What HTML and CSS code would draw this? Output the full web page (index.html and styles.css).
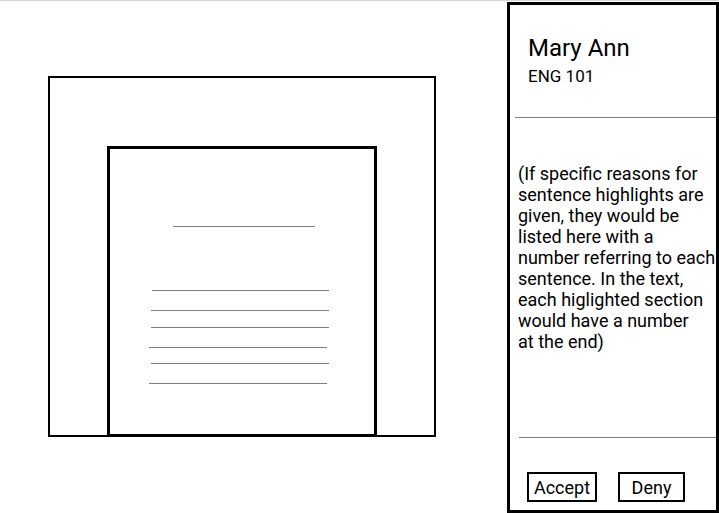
FILE: index.html
```html
<!DOCTYPE html>
<html>
<head>
<meta charset="utf-8">
<link rel="stylesheet" href="styles.css">
</head>
<body>
<div class="page">
  <main class="canvas">
    <div class="outer">
      <div class="doc">
        <div class="rule title"></div>
        <div class="rule r1"></div>
        <div class="rule r2"></div>
        <div class="rule r3"></div>
        <div class="rule r4"></div>
        <div class="rule r5"></div>
        <div class="rule r6"></div>
      </div>
    </div>
  </main>
  <aside class="panel">
    <div class="head">
      <div class="name">Mary Ann</div>
      <div class="course">ENG 101</div>
    </div>
    <div class="divider d1"></div>
    <p class="notes">(If specific reasons for<br>sentence highlights are<br>given, they would be<br>listed here with a<br>number referring to each<br>sentence. In the text,<br>each higlighted section<br>would have a number<br>at the end)</p>
    <div class="divider d2"></div>
    <div class="actions">
      <button class="btn accept">Accept</button>
      <button class="btn deny">Deny</button>
    </div>
  </aside>
</div>
</body>
</html>
```
FILE: styles.css
```css
html, body {
  margin: 0;
  padding: 0;
  background: #fff;
}
body {
  font-family: Roboto, "Liberation Sans", sans-serif;
  color: #000;
}
.page {
  display: flex;
  border-top: 1px solid #d6d6d6;
  width: 719px;
  height: 512px;
  overflow: hidden;
}
.canvas {
  flex: 1;
  padding-top: 75px;
}
.outer {
  box-sizing: border-box;
  margin-left: 48px;
  width: 388px;
  height: 361px;
  border: 2px solid #000;
  display: flex;
  align-items: flex-end;
}
.doc {
  box-sizing: border-box;
  margin-left: 57px;
  margin-bottom: -2px;
  width: 270px;
  height: 291px;
  border: 3px solid #000;
  background: #fff;
  display: flex;
  flex-direction: column;
}
.rule {
  height: 1px;
  background: #808080;
  flex: none;
}
.title { margin: 77px 0 0 63px; width: 142px; }
.r1 { margin: 63px 0 0 42px; width: 177px; }
.r2 { margin: 19px 0 0 41px; width: 178px; }
.r3 { margin: 16px 0 0 41px; width: 178px; }
.r4 { margin: 19px 0 0 39px; width: 178px; }
.r5 { margin: 15px 0 0 41px; width: 178px; }
.r6 { margin: 19px 0 0 39px; width: 178px; }

.panel {
  box-sizing: border-box;
  width: 212px;
  height: 511px;
  margin-top: 1px;
  border: 3px solid #000;
  display: flex;
  flex-direction: column;
}
.head {
  padding: 29px 0 0 18px;
}
.name {
  font-size: 24px;
  line-height: 28px;
}
.course {
  font-size: 17px;
  line-height: 20px;
  margin-top: 4px;
}
.divider {
  height: 1px;
  background: #808080;
}
.d1 {
  margin: 31px 0 0 5px;
}
.notes {
  margin: 45px 0 0 8px;
  font-size: 18px;
  line-height: 21px;
  white-space: nowrap;
}
.d2 {
  margin: auto 0 0 9px;
}
.actions {
  display: flex;
  gap: 21px;
  padding-left: 17px;
  margin: 34px 0 8px;
}
.btn {
  box-sizing: border-box;
  height: 30px;
  border: 2px solid #000;
  background: #fff;
  font-family: Roboto, "Liberation Sans", sans-serif;
  font-size: 18px;
  color: #000;
  padding: 0;
  border-radius: 0;
}
.accept { width: 70px; }
.deny { width: 67px; }
```
